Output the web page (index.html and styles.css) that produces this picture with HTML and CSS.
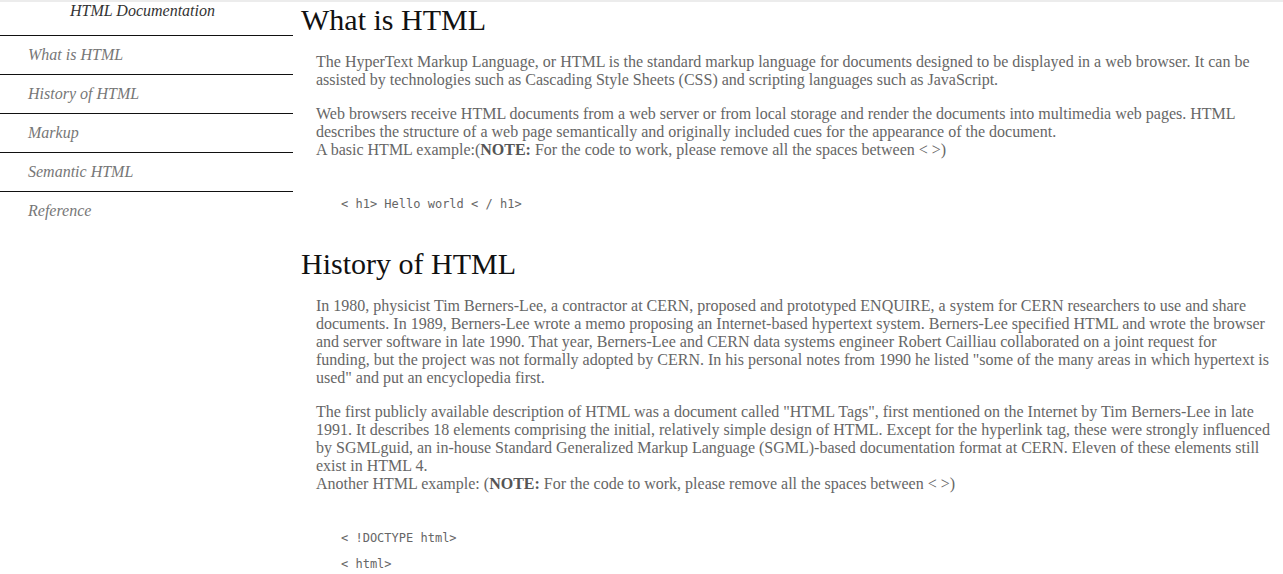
FILE: index.html
```html
<!DOCTYPE html>
<html lang="en">
<head>
<meta charset="utf-8">
<title>HTML Documentation</title>
<link rel="stylesheet" href="styles.css">
</head>
<body>
<div class="page">
  <nav class="navbar">
    <header class="nav-title">HTML Documentation</header>
    <a class="nav-link" href="#What_is_HTML">What is HTML</a>
    <a class="nav-link" href="#History_of_HTML">History of HTML</a>
    <a class="nav-link" href="#Markup">Markup</a>
    <a class="nav-link" href="#Semantic_HTML">Semantic HTML</a>
    <a class="nav-link" href="#Reference">Reference</a>
  </nav>
  <main class="main">
    <section class="section" id="What_is_HTML">
      <header class="section-title">What is HTML</header>
      <p class="para">The HyperText Markup Language, or HTML is the standard markup language for documents designed to be displayed in a web browser. It can be assisted by technologies such as Cascading Style Sheets (CSS) and scripting languages such as JavaScript.</p>
      <p class="para">Web browsers receive HTML documents from a web server or from local storage and render the documents into multimedia web pages. HTML describes the structure of a web page semantically and originally included cues for the appearance of the document.<br>A basic HTML example:(<b>NOTE:</b> For the code to work, please remove all the spaces between &lt; &gt;)</p>
      <div class="code-block">
        <code class="code-line">&lt; h1&gt; Hello world &lt; / h1&gt;</code>
      </div>
    </section>
    <section class="section" id="History_of_HTML">
      <header class="section-title">History of HTML</header>
      <p class="para">In 1980, physicist Tim Berners-Lee, a contractor at CERN, proposed and prototyped ENQUIRE, a system for CERN researchers to use and share documents. In 1989, Berners-Lee wrote a memo proposing an Internet-based hypertext system. Berners-Lee specified HTML and wrote the browser and server software in late 1990. That year, Berners-Lee and CERN data systems engineer Robert Cailliau collaborated on a joint request for funding, but the project was not formally adopted by CERN. In his personal notes from 1990 he listed "some of the many areas in which hypertext is used" and put an encyclopedia first.</p>
      <p class="para">The first publicly available description of HTML was a document called "HTML Tags", first mentioned on the Internet by Tim Berners-Lee in late 1991. It describes 18 elements comprising the initial, relatively simple design of HTML. Except for the hyperlink tag, these were strongly influenced by SGMLguid, an in-house Standard Generalized Markup Language (SGML)-based documentation format at CERN. Eleven of these elements still exist in HTML 4.<br>Another HTML example: (<b>NOTE:</b> For the code to work, please remove all the spaces between &lt; &gt;)</p>
      <div class="code-block">
        <code class="code-line">&lt; !DOCTYPE html&gt;</code>
        <code class="code-line">&lt; html&gt;</code>
      </div>
    </section>
  </main>
</div>
</body>
</html>
```
FILE: styles.css
```css
html, body {
  margin: 0;
  padding: 0;
  background: #fff;
}
body {
  font-family: "Liberation Serif", "Times New Roman", serif;
  border-top: 2px solid #ececec;
  height: 572px;
  overflow: hidden;
}
.page {
  display: flex;
  align-items: flex-start;
}
.navbar {
  width: 293px;
  flex: none;
  display: flex;
  flex-direction: column;
}
.nav-title {
  font-style: italic;
  font-size: 16px;
  color: #333;
  text-align: center;
  height: 33px;
  line-height: 17px;
  padding-right: 8px;
}
.nav-link {
  display: block;
  border-top: 1px solid #111;
  height: 39px;
  box-sizing: border-box;
  padding-left: 28px;
  line-height: 37px;
  font-style: italic;
  font-size: 16px;
  color: #777;
  text-decoration: none;
}
.main {
  flex: 1;
  padding-left: 8px;
  padding-right: 12px;
}
.section-title {
  font-size: 30px;
  color: #111;
  line-height: 34px;
  margin-top: 1px;
  margin-bottom: 3px;
}
.para {
  margin: 16px 0 0 15px;
  font-size: 16px;
  line-height: 18px;
  color: #666;
}
.para b {
  color: #555;
}
.code-block {
  margin: 38px 0 36px 40px;
  display: flex;
  flex-direction: column;
  gap: 12px;
}
.code-line {
  font-family: "DejaVu Sans Mono", monospace;
  font-size: 12px;
  line-height: 14px;
  color: #666;
}
```
